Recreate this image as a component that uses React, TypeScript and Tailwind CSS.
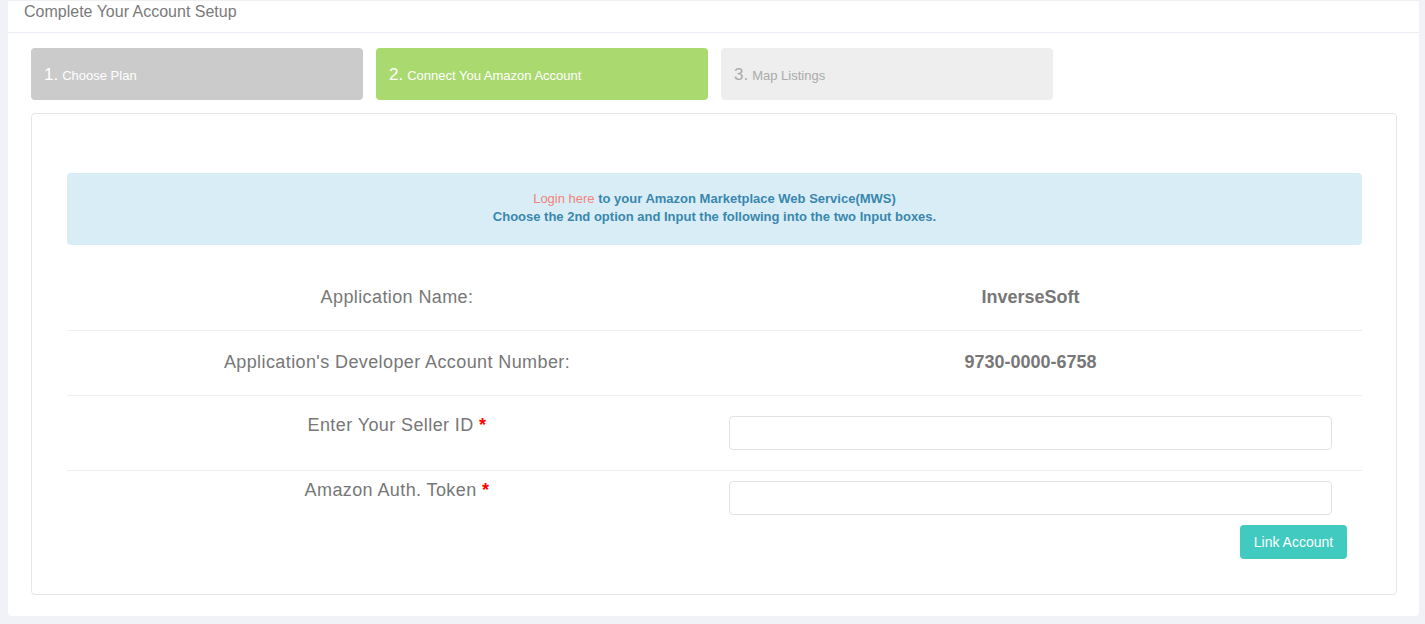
const steps = [
    { num: "1.", label: "Choose Plan", className: "bg-[#cbcbcb] text-white" },
    { num: "2.", label: "Connect You Amazon Account", className: "bg-[#a9d96f] text-white" },
    { num: "3.", label: "Map Listings", className: "bg-[#eeeeee] text-[#aaaaaa]" },
];

const InfoRow = ({ label, value }: { label: string; value: string }) => (
    <div className="flex border-b border-[#eceef3] pt-[19px] pb-[21px] leading-[24px]">
        <div className="w-[660px] text-center text-[18px] tracking-[0.4px] text-[#777777]">{label}</div>
        <div className="w-[605px] pl-[2px] text-center text-[18px] font-bold text-[#777777]">{value}</div>
    </div>
);

const App = () => {
    return (
        <div
            className="min-h-screen w-full bg-[#f1f2f7] pl-[8px] pr-[6px] pb-[8px]"
            style={{ fontFamily: '"Liberation Sans", Arial, sans-serif' }}
        >
            <div className="rounded-b-[4px] border-t border-[#eef0f4] bg-white pb-[21px]">
                <div className="h-[32px] border-b border-[#eaedf3] pl-[16px] pt-[1px] text-[16px] leading-[20px] font-light text-[#7a7a7a]">
                    Complete Your Account Setup
                </div>

                <div className="mt-[15px] flex gap-[13px] pl-[23px]">
                    {steps.map((s) => (
                        <div
                            key={s.num}
                            className={"flex h-[52px] w-[332px] items-center rounded-[4px] pl-[13px] pt-[1px] " + s.className}
                        >
                            <span className="text-[17px]">{s.num}</span>
                            <span className="ml-[4px] mt-[2px] text-[13px]">{s.label}</span>
                        </div>
                    ))}
                </div>

                <div className="ml-[23px] mr-[22px] mt-[13px] rounded-[4px] border border-[#e6e6e6] pl-[35px] pr-[34px] pt-[59px] pb-[35px]">
                    <div className="rounded-[4px] bg-[#d9edf7] pt-[17px] pb-[19px] text-center text-[13px] leading-[18px] font-bold text-[#3a87ad]">
                        <div>
                            <span className="font-normal text-[#f0837b]">Login here</span> to your Amazon Marketplace Web Service(MWS)
                        </div>
                        <div>Choose the 2nd option and Input the following into the two Input boxes.</div>
                    </div>

                    <div className="mt-[21px]">
                        <InfoRow label="Application Name:" value="InverseSoft" />
                        <InfoRow label="Application's Developer Account Number:" value="9730-0000-6758" />

                        <div className="flex items-start border-b border-[#eceef3] pb-[20px]">
                            <div className="w-[660px] pt-[17px] text-center text-[18px] leading-[24px] tracking-[0.4px] text-[#777777]">
                                Enter Your Seller ID <span className="font-bold text-[#ff0000]">*</span>
                            </div>
                            <div className="pl-[2px] pt-[20px]">
                                <input
                                    type="text"
                                    className="block h-[34px] w-[603px] rounded-[4px] border border-[#e2e2e4] bg-white px-3 outline-none"
                                />
                            </div>
                        </div>

                        <div className="flex items-start">
                            <div className="w-[660px] pt-[7px] text-center text-[18px] leading-[24px] tracking-[0.4px] text-[#777777]">
                                Amazon Auth. Token <span className="font-bold text-[#ff0000]">*</span>
                            </div>
                            <div className="pl-[2px] pt-[10px]">
                                <input
                                    type="text"
                                    className="block h-[34px] w-[603px] rounded-[4px] border border-[#e2e2e4] bg-white px-3 outline-none"
                                />
                            </div>
                        </div>

                        <div className="mt-[10px] flex justify-end pr-[15px]">
                            <button
                                type="button"
                                className="h-[34px] w-[107px] rounded-[4px] bg-[#41cac0] text-[14px] text-white"
                            >
                                Link Account
                            </button>
                        </div>
                    </div>
                </div>
            </div>
        </div>
    );
};

export default App;
